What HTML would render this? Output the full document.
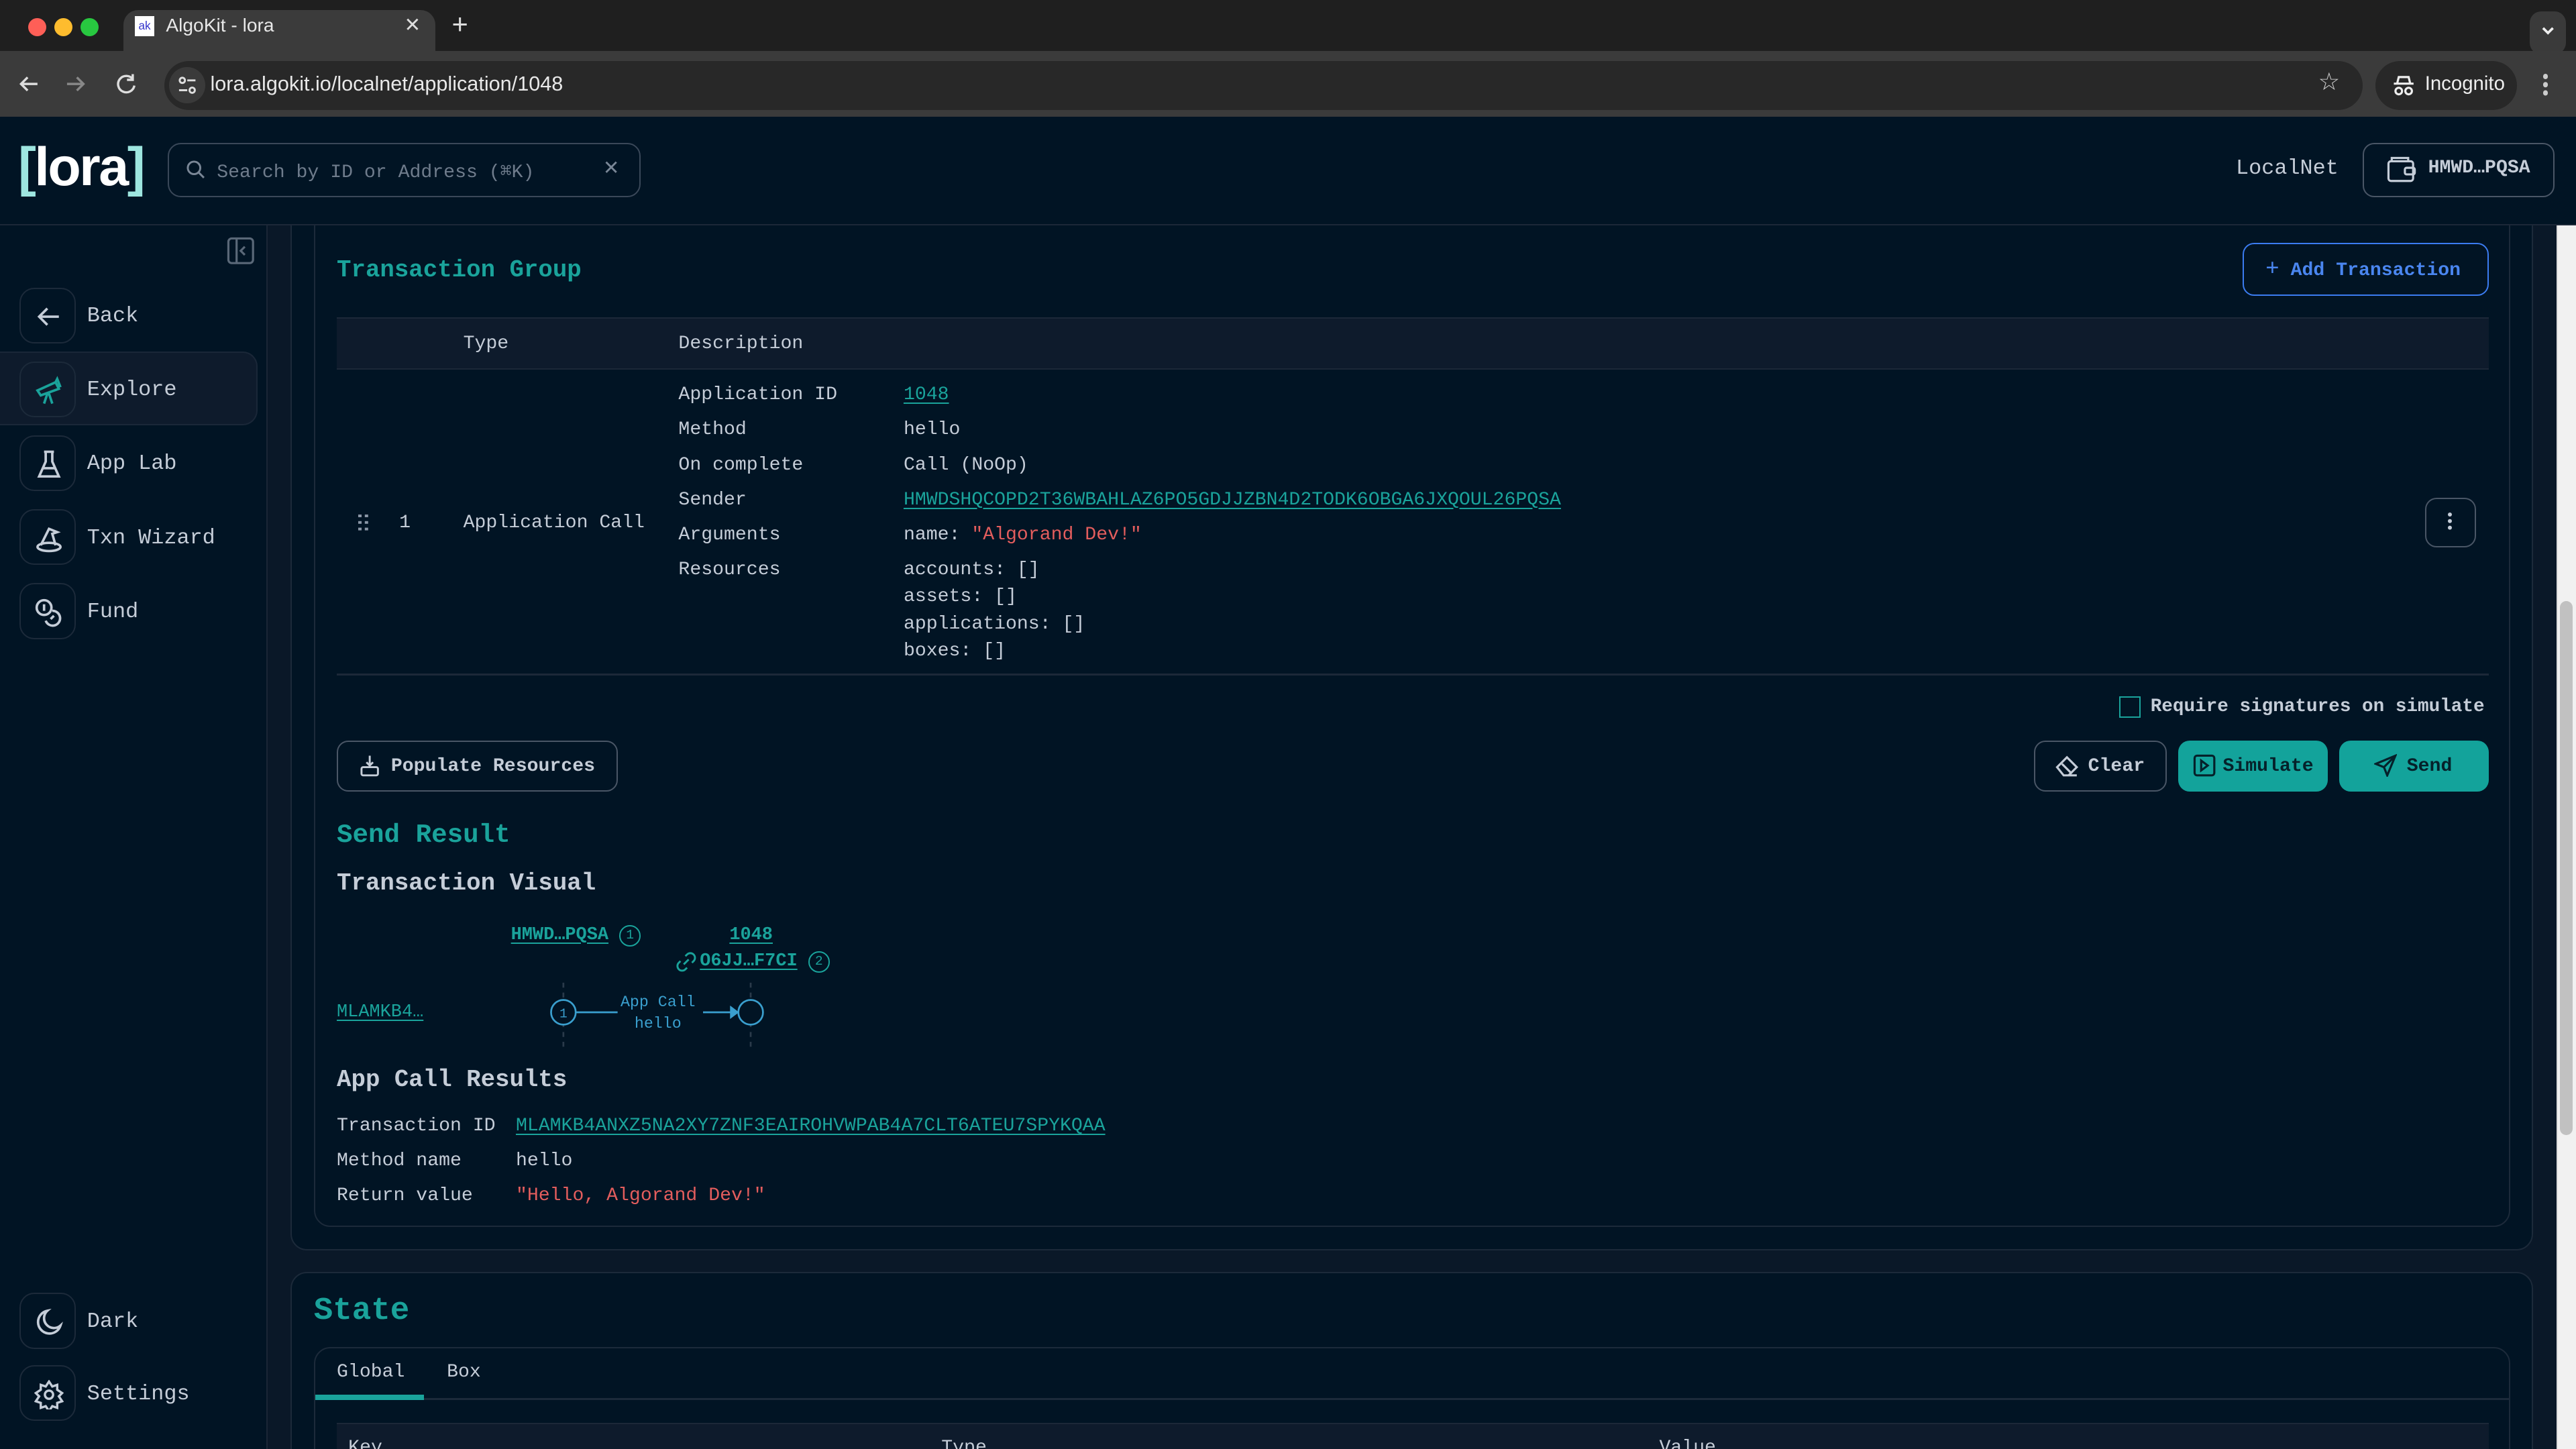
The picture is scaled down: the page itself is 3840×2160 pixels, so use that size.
<!DOCTYPE html>
<html><head><meta charset="utf-8"><style>
*{box-sizing:border-box;margin:0;padding:0}
html,body{width:3840px;height:2160px;overflow:hidden;background:#011424}
#z{zoom:2.44898;width:1568px;height:882px;position:relative;overflow:hidden;background:#0a1828;font-family:"Liberation Mono",monospace;color:#c5cdd8;font-size:11.5px}
.a{position:absolute;white-space:nowrap}
.s{font-family:"Liberation Sans",sans-serif}
.teal{color:#1aa39b}
.lnk{color:#1aa39b;text-decoration:underline;text-underline-offset:2px}
.red{color:#e35d5d}
.ib{position:absolute;left:12px;width:34px;height:34px;border:1px solid #1c2a3a;border-radius:9px}
.ib svg{position:absolute;left:8px;top:8px}
.nt{position:absolute;left:53px;font-size:13px;color:#c5cdd8}
.btn{position:absolute;border:1px solid #4a5666;border-radius:7px;height:31px}
</style></head><body><div id="z">
<!-- main cards (first so header covers them) -->
<div class="a" style="left:177px;top:110px;width:1365px;height:651px;background:#011424;border:1px solid #1c2a3a;border-radius:10px"></div>
<div class="a" style="left:191px;top:110px;width:1337px;height:637px;border:1px solid #1c2a3a;border-radius:10px"></div>
<!-- browser chrome -->
<div class="a" style="left:0;top:0;width:1568px;height:31px;background:#1f1f1f"></div>
<div class="a" style="left:17px;top:11px;width:11px;height:11px;border-radius:50%;background:#fe5f57"></div>
<div class="a" style="left:33px;top:11px;width:11px;height:11px;border-radius:50%;background:#febc2e"></div>
<div class="a" style="left:49px;top:11px;width:11px;height:11px;border-radius:50%;background:#28c840"></div>
<div class="a" style="left:75px;top:6px;width:190px;height:26px;background:#3b3b3b;border-radius:9px 9px 0 0"></div>
<div class="a" style="left:82px;top:10px;width:12px;height:12px;background:#fff;font:7px 'Liberation Sans';color:#33c;text-align:center;line-height:12px">ak</div>
<div class="a s" style="left:101px;top:9px;font-size:11.5px;color:#e8e8e8">AlgoKit - lora</div>
<div class="a s" style="left:246px;top:8px;font-size:12px;color:#ddd">✕</div>
<div class="a s" style="left:275px;top:5px;font-size:17px;color:#ddd">+</div>
<div class="a" style="left:1540px;top:7px;width:22px;height:26px;background:#3a3a3a;border-radius:7px"></div>
<svg class="a" style="left:1546px;top:13px" width="10" height="10"><path d="M2 4l3 3 3-3" stroke="#eee" stroke-width="1.5" fill="none"/></svg>
<div class="a" style="left:0;top:31px;width:1568px;height:40px;background:#3b3b3b"></div>
<svg class="a" style="left:10px;top:44px" width="75" height="14" fill="none" stroke="#ddd" stroke-width="1.4"><path d="M13 7H3M7 3L3 7l4 4"/><path d="M31 7h10M37 3l4 4-4 4" stroke="#888"/><path d="M71 4a5 5 0 1 0 1 4M71 1v3.5h-3.5"/></svg>
<div class="a" style="left:100px;top:37px;width:1338px;height:30px;background:#282828;border-radius:15px"></div>
<div class="a" style="left:103px;top:41px;width:22px;height:22px;border-radius:50%;background:#3a3a3a"></div>
<svg class="a" style="left:107px;top:45px" width="14" height="14" fill="none" stroke="#ddd" stroke-width="1.2"><circle cx="4" cy="4" r="1.6"/><path d="M7 4h5M2 10h5"/><circle cx="10" cy="10" r="1.6"/></svg>
<div class="a s" style="left:128px;top:44px;font-size:12.5px;color:#e8e8e8">lora.algokit.io/localnet/application/1048</div>
<div class="a s" style="left:1411px;top:41px;font-size:15px;color:#ccc">☆</div>
<div class="a" style="left:1446px;top:37px;width:86px;height:30px;background:#282828;border-radius:15px"></div>
<svg class="a" style="left:1456px;top:45px" width="14" height="14" fill="none" stroke="#eee" stroke-width="1.3"><path d="M4 2h6l1 4H3zM1 6h12"/><circle cx="4" cy="10.5" r="2"/><circle cx="10" cy="10.5" r="2"/></svg>
<div class="a s" style="left:1476px;top:44px;font-size:12px;color:#eee">Incognito</div>
<div class="a" style="left:1548px;top:45px;width:3px;height:3px;border-radius:50%;background:#ccc;box-shadow:0 5px 0 #ccc,0 10px 0 #ccc"></div>
<!-- app header -->
<div class="a" style="left:0;top:71px;width:1568px;height:66px;background:#011424;border-bottom:1px solid #1c2838"></div>
<div class="a s" style="left:11px;top:83px;font-size:33px;font-weight:bold;letter-spacing:-1px"><span style="color:#9ee6e0">[</span><span style="color:#fff">lora</span><span style="color:#9ee6e0">]</span></div>
<div class="a" style="left:102px;top:87px;width:288px;height:33px;border:1px solid #3a4859;border-radius:8px"></div>
<svg class="a" style="left:113px;top:97px" width="12" height="12" fill="none" stroke="#7a8797" stroke-width="1.2"><circle cx="5" cy="5" r="3.8"/><path d="M8 8l3 3"/></svg>
<div class="a" style="left:132px;top:97px;color:#6f7c8c">Search by ID or Address (⌘K)</div>
<div class="a s" style="left:367px;top:95px;font-size:12px;color:#7a8797">✕</div>
<div class="a" style="left:1361px;top:95px;font-size:13px;color:#c5cdd8">LocalNet</div>
<div class="btn" style="left:1438px;top:87px;width:117px;height:33px"></div>
<svg class="a" style="left:1453px;top:95px" width="18" height="16" fill="none" stroke="#c5cdd8" stroke-width="1.3"><rect x="1" y="3" width="15" height="12" rx="1.5"/><path d="M3 3V1h10v2"/><rect x="11" y="7" width="6" height="4" rx="1"/></svg>
<div class="a" style="left:1478px;top:96px;font-weight:bold;color:#c5cdd8">HMWD…PQSA</div>
<!-- sidebar -->
<div class="a" style="left:0;top:137px;width:163px;height:745px;background:#011424;border-right:1px solid #1a2636"></div>
<svg class="a" style="left:138px;top:144px" width="17" height="17" fill="none" stroke="#5a6878" stroke-width="1.3"><rect x="1" y="1" width="15" height="15" rx="2"/><path d="M6 1v15M11 6l-2.5 2.5L11 11"/></svg>
<div class="ib" style="top:175px"><svg width="18" height="18" fill="none" stroke="#c5cdd8" stroke-width="1.5"><path d="M15 9H3M8 4L3 9l5 5"/></svg></div>
<div class="nt" style="top:185px">Back</div>
<div class="a" style="left:0;top:214px;width:157px;height:45px;background:#0e1b2c;border:1px solid #1a2738;border-left:none;border-radius:0 9px 9px 0"></div>
<div class="ib" style="top:220px"><svg width="18" height="18" fill="none" stroke="#1aa39b" stroke-width="1.5"><path d="M2 9l11-5 2 4-11 4zM8 11l-2 6M9 11l2 6M13 4l1-2 2 5"/></svg></div>
<div class="nt teal" style="top:230px">Explore</div>
<div class="ib" style="top:265px"><svg width="18" height="18" fill="none" stroke="#c5cdd8" stroke-width="1.5"><path d="M6 1h6M7 1v6L3 16h12L11 7V1M5 11h8"/></svg></div>
<div class="nt" style="top:275px">App Lab</div>
<div class="ib" style="top:310px"><svg width="18" height="18" fill="none" stroke="#c5cdd8" stroke-width="1.5"><path d="M4 13L9 3l5 2-3 1 2 7"/><ellipse cx="9" cy="14" rx="7" ry="2.5"/></svg></div>
<div class="nt" style="top:320px">Txn Wizard</div>
<div class="ib" style="top:355px"><svg width="18" height="18" fill="none" stroke="#c5cdd8" stroke-width="1.5"><circle cx="6" cy="6" r="4.5"/><path d="M6 4v4"/><path d="M11 8a4.5 4.5 0 1 1-4 6M10 13l2-2"/></svg></div>
<div class="nt" style="top:365px">Fund</div>
<div class="ib" style="top:787px"><svg width="18" height="18" fill="none" stroke="#c5cdd8" stroke-width="1.5"><path d="M8 2a7 7 0 1 0 8 9A5.5 5.5 0 0 1 8 2z"/></svg></div>
<div class="nt" style="top:797px">Dark</div>
<div class="ib" style="top:831px"><svg width="18" height="18" fill="none" stroke="#c5cdd8" stroke-width="1.4"><circle cx="9" cy="9" r="2.5"/><path d="M9 1l2 3 3-1 0 3 3 2-2 2 2 3-3 1v3l-3-1-2 3-2-3-3 1v-3l-3-1 2-3-2-2 3-2V3l3 1z"/></svg></div>
<div class="nt" style="top:841px">Settings</div>
<!-- main content -->
<div class="a" style="left:205px;top:156px;font-size:14.6px;font-weight:bold;color:#1aa39b">Transaction Group</div>
<div class="a" style="left:1365px;top:148px;width:150px;height:32px;border:1px solid #3b7cf0;border-radius:7px"></div>
<div class="a" style="left:1379px;top:156px;font-weight:bold;color:#4a86f0"><span style="font-weight:normal;font-size:14px">+</span> Add Transaction</div>
<div class="a" style="left:205px;top:193px;width:1310px;height:32px;background:#0e1b2c;border-top:1px solid #1c2838;border-bottom:1px solid #1c2838"></div>
<div class="a" style="left:282px;top:203px">Type</div>
<div class="a" style="left:413px;top:203px">Description</div>
<div class="a" style="left:413px;top:230px;line-height:21.3px">Application ID<br>Method<br>On complete<br>Sender<br>Arguments<br>Resources</div>
<div class="a" style="left:550px;top:230px;line-height:21.3px"><span class="lnk">1048</span><br>hello<br>Call (NoOp)<br><span class="lnk">HMWDSHQCOPD2T36WBAHLAZ6PO5GDJJZBN4D2TODK6OBGA6JXQOUL26PQSA</span><br>name: <span class="red">"Algorand Dev!"</span></div>
<div class="a" style="left:550px;top:339px;line-height:16.4px">accounts: []<br>assets: []<br>applications: []<br>boxes: []</div>
<div class="a" style="left:218px;top:313px;width:2px;height:2px;background:#8a96a6;box-shadow:4px 0 #8a96a6,0 4px #8a96a6,4px 4px #8a96a6,0 8px #8a96a6,4px 8px #8a96a6"></div>
<div class="a" style="left:243px;top:312px">1</div>
<div class="a" style="left:282px;top:312px">Application Call</div>
<div class="btn" style="left:1476px;top:303px;width:31px;height:30px"></div>
<div class="a" style="left:1490px;top:312px;width:2.5px;height:2.5px;border-radius:50%;background:#c5cdd8;box-shadow:0 4px #c5cdd8,0 8px #c5cdd8"></div>
<div class="a" style="left:205px;top:410px;width:1310px;height:1px;background:#1c2838"></div>
<div class="a" style="left:1290px;top:424px;width:13px;height:13px;border:1px solid #1aa39b"></div>
<div class="a" style="left:1309px;top:424px;font-weight:bold;font-size:11.3px">Require signatures on simulate</div>
<div class="btn" style="left:205px;top:451px;width:171px"></div>
<svg class="a" style="left:218px;top:459px" width="14" height="14" fill="none" stroke="#c5cdd8" stroke-width="1.2"><path d="M7 1v6M5 5l2 2 2-2"/><rect x="2" y="8" width="10" height="5" rx="1"/></svg>
<div class="a" style="left:238px;top:460px;font-weight:bold">Populate Resources</div>
<div class="btn" style="left:1238px;top:451px;width:81px"></div>
<svg class="a" style="left:1251px;top:459px" width="14" height="14" fill="none" stroke="#c5cdd8" stroke-width="1.3"><path d="M1 8l6-6 6 6-5 5H5zM4 6l6 6M5 13h8"/></svg>
<div class="a" style="left:1271px;top:460px;font-weight:bold">Clear</div>
<div class="a" style="left:1326px;top:451px;width:91px;height:31px;background:#13a39b;border-radius:7px"></div>
<svg class="a" style="left:1335px;top:459px" width="14" height="14" fill="none" stroke="#05212a" stroke-width="1.3"><rect x="1" y="1" width="12" height="12" rx="1.5"/><path d="M5 4v6l4-3z"/></svg>
<div class="a" style="left:1353px;top:460px;font-weight:bold;color:#05212a">Simulate</div>
<div class="a" style="left:1424px;top:451px;width:91px;height:31px;background:#13a39b;border-radius:7px"></div>
<svg class="a" style="left:1445px;top:459px" width="14" height="14" fill="none" stroke="#05212a" stroke-width="1.3"><path d="M13 1L1 6l5 2 2 5zM6 8l7-7"/></svg>
<div class="a" style="left:1465px;top:460px;font-weight:bold;color:#05212a">Send</div>
<div class="a" style="left:205px;top:499px;font-size:16px;font-weight:bold;color:#1aa39b">Send Result</div>
<div class="a" style="left:205px;top:529px;font-size:14.6px;font-weight:bold;color:#c5cdd8">Transaction Visual</div>
<!-- visual -->
<div class="a lnk" style="left:311px;top:563px;font-size:11px;font-weight:bold">HMWD…PQSA</div>
<div class="a" style="left:377px;top:563px;width:13px;height:13px;border:1px solid #1aa39b;border-radius:50%;color:#1aa39b;font-size:8px;text-align:center;line-height:11px">1</div>
<div class="a lnk" style="left:444px;top:563px;font-size:11px;font-weight:bold">1048</div>
<svg class="a" style="left:411px;top:579px" width="13" height="13" fill="none" stroke="#1aa39b" stroke-width="1.2"><path d="M5 8l3-3M6 3l1-1a2.5 2.5 0 0 1 4 4l-1 1M7 10l-1 1a2.5 2.5 0 0 1-4-4l1-1"/></svg>
<div class="a lnk" style="left:426px;top:579px;font-size:11px;font-weight:bold">O6JJ…F7CI</div>
<div class="a" style="left:492px;top:579px;width:13px;height:13px;border:1px solid #1aa39b;border-radius:50%;color:#1aa39b;font-size:8px;text-align:center;line-height:11px">2</div>
<div class="a lnk" style="left:205px;top:610px;font-size:11px">MLAMKB4…</div>
<svg class="a" style="left:330px;top:596px" width="140" height="42" fill="none" stroke="#3a9fce" stroke-width="1.1"><path d="M13 2v40M127 2v40" stroke="#2a3a4a" stroke-dasharray="3 3"/><circle cx="13" cy="20" r="7.5" fill="#011424"/><circle cx="127" cy="20" r="7.5" fill="#011424"/><path d="M21 20h25M98 20h20"/><path d="M115 17l4 3-4 3z" fill="#3a9fce"/><text x="13" y="23" font-size="8" fill="#3a9fce" stroke="none" text-anchor="middle" font-family="Liberation Mono">1</text></svg>
<div class="a" style="left:377px;top:604px;font-size:9.5px;color:#3a9fce;text-align:center;line-height:13px;width:47px">App Call<br>hello</div>
<div class="a" style="left:205px;top:649px;font-size:14.6px;font-weight:bold">App Call Results</div>
<div class="a" style="left:205px;top:675px;line-height:21.3px">Transaction ID<br>Method name<br>Return value</div>
<div class="a" style="left:314px;top:675px;line-height:21.3px"><span class="lnk">MLAMKB4ANXZ5NA2XY7ZNF3EAIROHVWPAB4A7CLT6ATEU7SPYKQAA</span><br>hello<br><span class="red">"Hello, Algorand Dev!"</span></div>
<!-- state -->
<div class="a" style="left:177px;top:774px;width:1365px;height:130px;background:#011424;border:1px solid #1c2a3a;border-radius:10px"></div>
<div class="a" style="left:191px;top:787px;font-size:19.4px;font-weight:bold;color:#1aa39b">State</div>
<div class="a" style="left:191px;top:820px;width:1337px;height:80px;border:1px solid #1c2a3a;border-radius:10px"></div>
<div class="a" style="left:205px;top:829px">Global</div>
<div class="a" style="left:272px;top:829px">Box</div>
<div class="a" style="left:192px;top:851px;width:1335px;height:1px;background:#1c2a3a"></div>
<div class="a" style="left:192px;top:849px;width:66px;height:3px;background:#1aa39b"></div>
<div class="a" style="left:205px;top:866px;width:1310px;height:20px;background:#0e1b2c;border-top:1px solid #1c2838"></div>
<div class="a" style="left:212px;top:875px">Key</div>
<div class="a" style="left:573px;top:875px">Type</div>
<div class="a" style="left:1010px;top:875px">Value</div>
<!-- scrollbar -->
<div class="a" style="left:1556px;top:137px;width:12px;height:745px;background:#f1f1f1;border-left:1px solid #ddd"></div>
<div class="a" style="left:1558px;top:366px;width:8px;height:325px;background:#c1c1c1;border-radius:4px"></div>
</div></body></html>
